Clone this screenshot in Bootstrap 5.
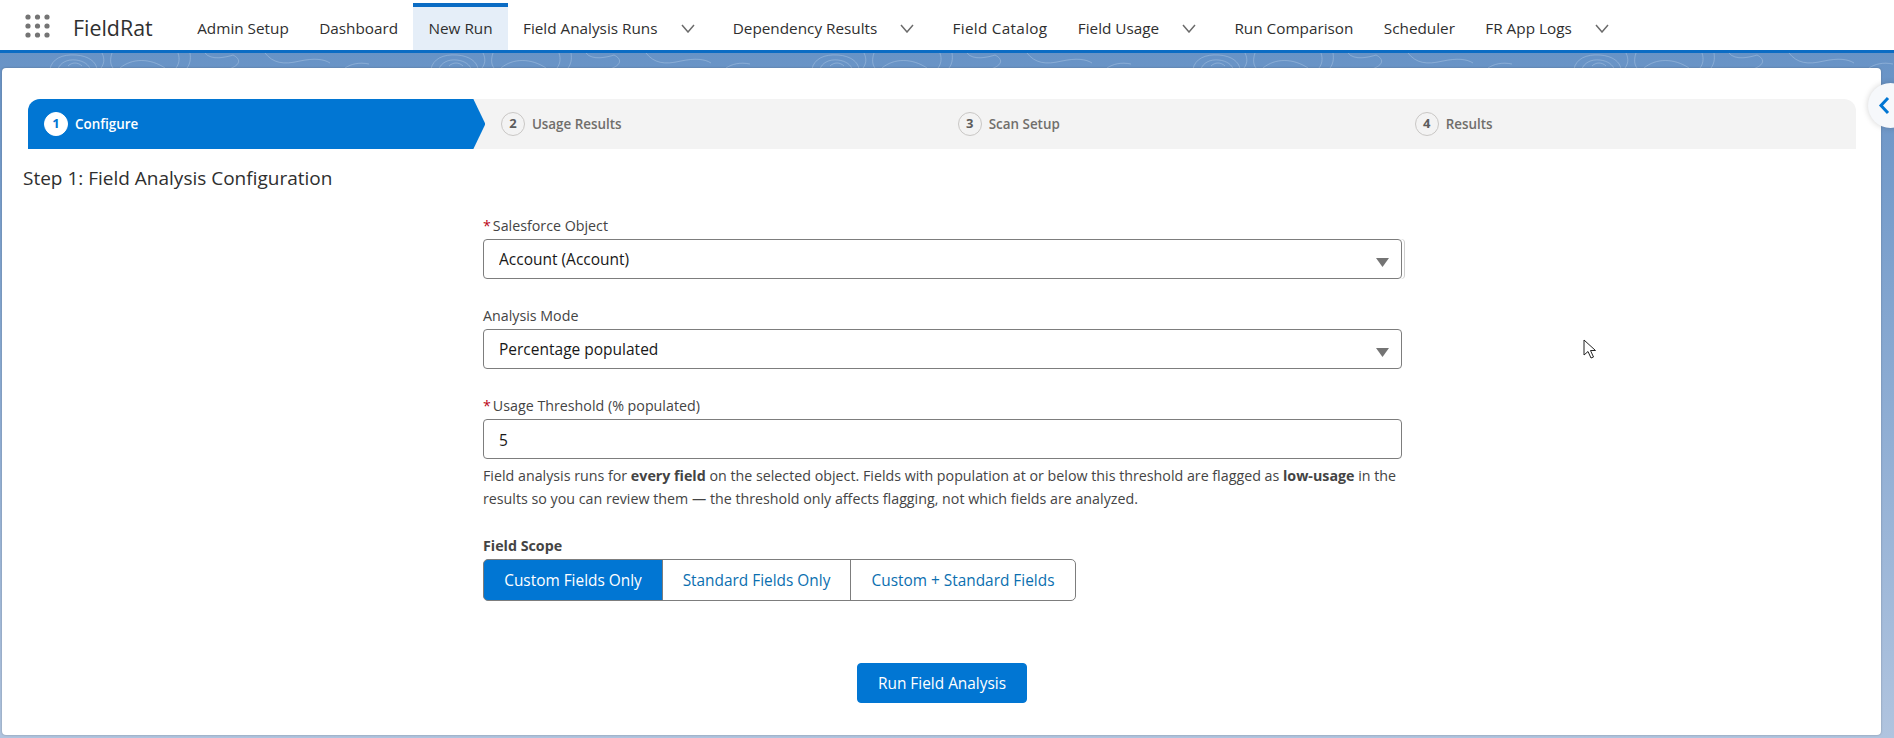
<!DOCTYPE html>
<html lang="en">
<head>
    <meta charset="UTF-8">
    <title>FieldRat - New Run</title>
    <link href="https://cdn.jsdelivr.net/npm/bootstrap@5.3.2/dist/css/bootstrap.min.css" rel="stylesheet">
    <style>
        html, body { height: 100%; }
        body {
            font-family: "Open Sans", "Noto Sans", sans-serif;
            font-size: 14.25px;
            color: #3e3e3c;
            overflow: hidden;
            background-color: #b0c4df;
            background-image:
                url("data:image/svg+xml,%3Csvg xmlns='http://www.w3.org/2000/svg' width='381' height='20' fill='none' stroke='%23a9c3e2' stroke-width='.8' stroke-opacity='.65'%3E%3Cpath d='M50 16C52 6 62 1 76 2c13 1 20 7 21 14M58 16c2-6 9-10 18-9 8 1 13 5 14 9M68 13c4-4 10-4 14 0M102 0c3 6 2 11-1 15M112 0c-2 6-2 11 1 15M120 15c12-10 30-10 45 0M178 0c2 6 1 11-2 15M190 0c1 6 0 11-3 15M205 0c6 8 22 4 28 2 8 4 8 10-4 14M265 0c8 10 18 12 35 8 14-3 24-2 30 2M345 15c6-4 14-6 24-4'/%3E%3C/svg%3E"),
                linear-gradient(180deg, #6893c6 53px, #b0c4df 100%);
            background-repeat: repeat-x, no-repeat;
            background-position: 0 53px, 0 0;
        }
        .app-head {
            height: 53px;
            background: #fff;
            border-bottom: 3px solid #0b6cc4;
            padding-left: 25px;
        }
        .launcher { width: 25px; height: 24px; margin-top: 14px; flex: none; }
        .app-name { font-size: 21.4px; color: #2f2f2f; margin-left: 23px; width: 78px; line-height: 56px; flex: none; }
        .top-tabs { margin-left: 31px; height: 50px; flex-wrap: nowrap; }
        .top-tabs .nav-link {
            height: 50px;
            padding: 0 15.2px;
            color: #2f2f2f;
            font-size: 15.3px;
            line-height: 56px;
            white-space: nowrap;
        }
        .top-tabs .tab-on {
            margin-top: 3px;
            height: 47px;
            line-height: 42px;
            border-top: 4px solid #0b6cc4;
            background: #e5eef8;
        }
        .top-tabs .tab-wide { letter-spacing: .3px; }
        .tab-chev { width: 14px; height: 9px; margin-left: 23px; margin-right: 23px; vertical-align: 1px; }
        .main-card {
            margin: 15px 13px 3px 2px;
            height: 667px;
            padding-top: 31px;
            background: #fff;
            border-radius: 4px;
            box-shadow: 0 0 2px rgba(60, 60, 60, .45);
        }
        .path-bar {
            margin: 0 25px 0 26px;
            height: 50px;
            background: #f3f3f3;
            border-radius: 12px 12px 0 0;
            overflow: hidden;
        }
        .path-step { flex: 1 1 0; padding-left: 15.5px; color: #706e6b; font-weight: 600; font-size: 13.4px; }
        .path-num {
            width: 24px;
            height: 24px;
            margin-right: 7px;
            border: 1px solid #c9c7c5;
            border-radius: 50%;
            color: #5c5c5c;
            font-weight: 700;
            font-size: 13px;
        }
        .path-on {
            padding-left: 16px;
            color: #fff;
            background: #0176d3;
            clip-path: polygon(0 0, calc(100% - 12px) 0, 100% 50%, calc(100% - 12px) 100%, 0 100%);
        }
        .path-on .path-num { background: #fff; border-color: #fff; color: #0176d3; }
        .step-title { margin: 17px 0 0 21px; font-size: 19px; font-weight: 400; line-height: 24px; color: #2f2f2f; }
        .form-wrap { width: 919px; margin: 27px 0 0 481px; }
        .fld-label { display: block; margin-bottom: 4px; font-size: 14.25px; line-height: 18px; color: #444; }
        .req { color: #ba0517; margin-right: 2px; }
        .form-select, .form-control {
            height: 40px;
            padding: 2px 16px 0 15px;
            font-size: 15.5px;
            color: #181818;
            border: 1px solid #7d7d7d;
            border-radius: 4px;
        }
        .form-select {
            background-image: url("data:image/svg+xml,%3Csvg xmlns='http://www.w3.org/2000/svg' viewBox='0 0 13 9'%3E%3Cpath fill='%23747474' d='M0 0h13L6.500 9z'/%3E%3C/svg%3E");
            background-size: 13px 9px;
            background-position: right 12px top 18px;
        }
        .obj-select { box-shadow: 2px 0 0 #fff, 3px 0 0 #cfcfcf; }
        .fld-gap { margin-top: 28px; }
        .fld-help { margin: 5px 0 0; font-size: 14.25px; line-height: 23px; color: #444; }
        .fld-help b { font-weight: 700; }
        .scope-label { margin-top: 27px; font-weight: 700; }
        .scope-group .btn {
            flex: none;
            height: 42px;
            padding: 1px 0 0;
            font-size: 15.4px;
            line-height: 40px;
            color: #0b6fb0;
            border-color: #7d7d7d;
            border-radius: 5px;
        }
        .scope-group .scope-on { background: #0176d3; color: #fff; width: 180px; }
        .scope-group .scope-std { width: 189px; }
        .scope-group .scope-all { width: 226px; }
        .run-btn, .run-btn:hover {
            display: block;
            width: 170px;
            height: 40px;
            margin: 62px 0 0 374px;
            padding: 1px 0 0;
            font-size: 15.4px;
            color: #fff;
            background: #0176d3;
            border-color: #0176d3;
            border-radius: 4px;
        }
        .side-toggle {
            position: absolute;
            left: 1868px;
            top: 83px;
            width: 45px;
            height: 45px;
            border-radius: 50%;
            background: #f6f8fb;
            box-shadow: 0 0 6px rgba(0, 0, 0, .18);
        }
        .side-toggle svg { position: absolute; left: 10px; top: 13px; }
        .mouse-arrow { position: absolute; left: 1583px; top: 339px; }
    </style>
</head>
<body>
    <header class="app-head d-flex align-items-start">
        <svg class="launcher" viewBox="0 0 25 24" fill="#747474">
            <circle cx="3" cy="3" r="2.600"/><circle cx="12.500" cy="3" r="2.600"/><circle cx="22" cy="3" r="2.600"/>
            <circle cx="3" cy="12" r="2.600"/><circle cx="12.500" cy="12" r="2.600"/><circle cx="22" cy="12" r="2.600"/>
            <circle cx="3" cy="21" r="2.600"/><circle cx="12.500" cy="21" r="2.600"/><circle cx="22" cy="21" r="2.600"/>
        </svg>
        <div class="app-name">FieldRat</div>
        <ul class="nav top-tabs">
            <li class="nav-item"><a class="nav-link" href="#">Admin Setup</a></li>
            <li class="nav-item"><a class="nav-link" href="#">Dashboard</a></li>
            <li class="nav-item"><a class="nav-link tab-on" href="#">New Run</a></li>
            <li class="nav-item"><a class="nav-link pe-0" href="#">Field Analysis Runs<svg class="tab-chev" viewBox="0 0 14 9" fill="none" stroke="#6b6b6b" stroke-width="1.500"><path d="M1 1l6 7 6-7"/></svg></a></li>
            <li class="nav-item"><a class="nav-link pe-0" href="#">Dependency Results<svg class="tab-chev" viewBox="0 0 14 9" fill="none" stroke="#6b6b6b" stroke-width="1.500"><path d="M1 1l6 7 6-7"/></svg></a></li>
            <li class="nav-item"><a class="nav-link tab-wide" href="#">Field Catalog</a></li>
            <li class="nav-item"><a class="nav-link pe-0" href="#">Field Usage<svg class="tab-chev" viewBox="0 0 14 9" fill="none" stroke="#6b6b6b" stroke-width="1.500"><path d="M1 1l6 7 6-7"/></svg></a></li>
            <li class="nav-item"><a class="nav-link" href="#">Run Comparison</a></li>
            <li class="nav-item"><a class="nav-link" href="#">Scheduler</a></li>
            <li class="nav-item"><a class="nav-link pe-0" href="#">FR App Logs<svg class="tab-chev" viewBox="0 0 14 9" fill="none" stroke="#6b6b6b" stroke-width="1.500"><path d="M1 1l6 7 6-7"/></svg></a></li>
        </ul>
    </header>

    <main class="main-card">
        <div class="path-bar d-flex">
            <div class="path-step path-on d-flex align-items-center"><span class="path-num d-flex align-items-center justify-content-center">1</span>Configure</div>
            <div class="path-step d-flex align-items-center"><span class="path-num d-flex align-items-center justify-content-center">2</span>Usage Results</div>
            <div class="path-step d-flex align-items-center"><span class="path-num d-flex align-items-center justify-content-center">3</span>Scan Setup</div>
            <div class="path-step d-flex align-items-center"><span class="path-num d-flex align-items-center justify-content-center">4</span>Results</div>
        </div>
        <h2 class="step-title">Step 1: Field Analysis Configuration</h2>

        <form class="form-wrap">
            <label class="fld-label"><span class="req">*</span>Salesforce Object</label>
            <select class="form-select obj-select"><option>Account (Account)</option></select>

            <label class="fld-label fld-gap">Analysis Mode</label>
            <select class="form-select"><option>Percentage populated</option></select>

            <label class="fld-label fld-gap"><span class="req">*</span>Usage Threshold (% populated)</label>
            <input type="text" class="form-control" value="5">
            <p class="fld-help">
                <span class="d-block">Field analysis runs for <b>every field</b> on the selected object. Fields with population at or below this threshold are flagged as <b>low-usage</b> in the</span>
                <span class="d-block">results so you can review them — the threshold only affects flagging, not which fields are analyzed.</span>
            </p>

            <label class="fld-label scope-label">Field Scope</label>
            <div class="btn-group scope-group">
                <button type="button" class="btn scope-on">Custom Fields Only</button>
                <button type="button" class="btn scope-std">Standard Fields Only</button>
                <button type="button" class="btn scope-all">Custom + Standard Fields</button>
            </div>

            <button type="button" class="btn run-btn">Run Field Analysis</button>
        </form>
    </main>

    <div class="side-toggle">
        <svg width="13" height="19" viewBox="0 0 13 19" fill="none" stroke="#0176d3" stroke-width="3"><path d="M10 2L3 9.500l7 7.500"/></svg>
    </div>
    <svg class="mouse-arrow" width="14" height="21" viewBox="0 0 14 21"><path d="M1 1v15l4-3.500 3 6.500 2.500-1-3-6.500h5z" fill="#fff" stroke="#222" stroke-width="1"/></svg>
</body>
</html>
